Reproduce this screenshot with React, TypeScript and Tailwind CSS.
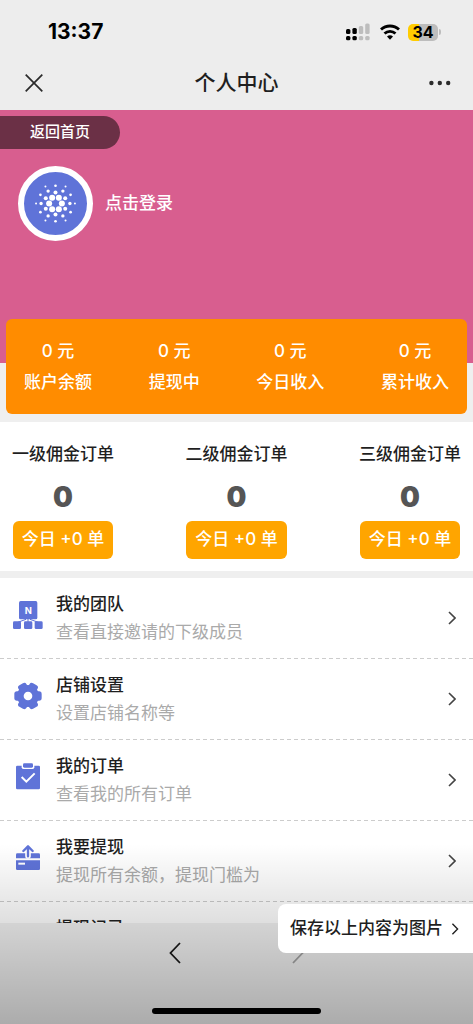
import type { ReactNode } from 'react';

const balances = [
  { label: '账户余额', value: 0 },
  { label: '提现中', value: 0 },
  { label: '今日收入', value: 0 },
  { label: '累计收入', value: 0 },
];

const orders = [
  { label: '一级佣金订单', total: 0, today: 0 },
  { label: '二级佣金订单', total: 0, today: 0 },
  { label: '三级佣金订单', total: 0, today: 0 },
];

const TeamIcon = () => (
  <svg viewBox="0 0 96 96" className="size-8 shrink-0 fill-[#5f73d8]" aria-hidden="true">
    <rect x="21" y="6" width="55" height="55" rx="5" />
    <path d="M48 60v10M17 70l25-9M79 70l-25-9" stroke="#5f73d8" strokeWidth="3" fill="none" />
    <rect x="3" y="67" width="24" height="23" rx="4" />
    <rect x="36" y="67" width="25" height="23" rx="4" />
    <rect x="68" y="67" width="24" height="23" rx="4" />
    <text x="49" y="44" textAnchor="middle" className="fill-white font-['Inter',sans-serif] text-[28px] font-bold">
      N
    </text>
  </svg>
);

const GearIcon = () => (
  <svg viewBox="-48 -48 96 96" className="size-8 shrink-0" aria-hidden="true">
    <g fill="#5f73d8">
      <circle r="33" />
      <rect x="-41" y="-14" width="82" height="28" rx="8" />
      <rect x="-41" y="-14" width="82" height="28" rx="8" transform="rotate(60)" />
      <rect x="-41" y="-14" width="82" height="28" rx="8" transform="rotate(120)" />
    </g>
    <circle r="13" fill="#fff" />
  </svg>
);

const OrderIcon = () => (
  <svg viewBox="0 0 96 96" className="size-8 shrink-0" aria-hidden="true">
    <rect x="12" y="14" width="72" height="71" rx="4" fill="#5f73d8" />
    <rect x="29" y="4" width="38" height="20" rx="5" fill="#fff" />
    <rect x="33" y="7" width="30" height="13" rx="4" fill="#5f73d8" />
    <path d="M29 48l14 14 25-25" stroke="#fff" strokeWidth="6" fill="none" />
  </svg>
);

const WithdrawIcon = () => (
  <svg viewBox="0 0 96 96" className="size-8 shrink-0" aria-hidden="true">
    <path d="M16 34h64q4 0 4 4v11H12V38q0-4 4-4z" fill="#5f73d8" />
    <path d="M12 55h72v25q0 4-4 4H16q-4 0-4-4z" fill="#5f73d8" />
    <path d="M48 42V14" stroke="#fff" strokeWidth="17" strokeLinecap="round" />
    <path d="M48 43V14M34 27l14-14 14 14" stroke="#5f73d8" strokeWidth="7" strokeLinecap="round" strokeLinejoin="round" fill="none" />
    <rect x="19" y="62" width="20" height="6" fill="#fff" />
  </svg>
);

const menu: { title: string; desc?: string; icon: ReactNode }[] = [
  { title: '我的团队', desc: '查看直接邀请的下级成员', icon: <TeamIcon /> },
  { title: '店铺设置', desc: '设置店铺名称等', icon: <GearIcon /> },
  { title: '我的订单', desc: '查看我的所有订单', icon: <OrderIcon /> },
  { title: '我要提现', desc: '提现所有余额，提现门槛为', icon: <WithdrawIcon /> },
  { title: '提现记录', icon: <OrderIcon /> },
];

// [x, y, radius] of every dot in the avatar
const dots = [
  [-19, 0, 9], [19, 0, 9], [-10, -17, 9], [10, -17, 9], [-10, 17, 9], [10, 17, 9],
  [0, -33, 6], [0, 33, 6], [-29, -16, 6], [29, -16, 6], [-29, 16, 6], [29, 16, 6],
  [-43, 0, 5], [43, 0, 5], [-22, -37, 5], [22, -37, 5], [-22, 37, 5], [22, 37, 5],
  [0, -53, 4], [0, 53, 4], [-45, -26, 4], [45, -26, 4], [-45, 26, 4], [45, 26, 4],
  [-58, 0, 3], [58, 0, 3], [-30, -51, 3], [30, -51, 3], [-30, 51, 3], [30, 51, 3],
];

const Chevron = ({ className }: { className: string }) => (
  <svg viewBox="0 0 8 14" className={className} fill="none" aria-hidden="true">
    <path d="M1 1l6 6-6 6" stroke="currentColor" strokeWidth="1.6" />
  </svg>
);

const StatusBar = () => (
  <div className="flex h-14 items-center justify-between pt-2 pr-8 pl-12">
    <span className="text-[21px] font-bold text-black">13:37</span>
    <div className="flex items-center gap-2">
      <svg viewBox="0 0 26 18" className="h-[18px] w-[26px]" aria-hidden="true">
        <g fill="#000">
          <rect x="0" y="6" width="4.4" height="5" rx="1.5" />
          <rect x="6.4" y="5" width="4.4" height="6" rx="1.5" />
          <rect x="0" y="13" width="4.4" height="4.2" rx="1.5" />
          <rect x="6.4" y="13" width="4.4" height="4.2" rx="1.5" />
        </g>
        <g fill="#bdbdbd">
          <rect x="12.8" y="3" width="4.4" height="8" rx="1.5" />
          <rect x="19.2" y="0.6" width="4.4" height="10.4" rx="1.5" />
          <rect x="12.8" y="13" width="4.4" height="4.2" rx="1.5" />
          <rect x="19.2" y="13" width="4.4" height="4.2" rx="1.5" />
        </g>
      </svg>
      <svg viewBox="0 0 20 16" className="h-4 w-5" fill="none" stroke="#000" strokeWidth="2.8" aria-hidden="true">
        <path d="M1 5.6a13 13 0 0 1 18 0" />
        <path d="M4.5 9.6a8 8 0 0 1 11 0" />
        <path d="M7 12.6a4.4 4.4 0 0 1 6 0L10 15.8z" fill="#000" stroke="none" />
      </svg>
      <div className="flex items-center gap-px">
        <span className="flex h-[17px] w-[30px] items-center justify-center rounded-[5px] bg-[linear-gradient(90deg,#ffcc00_37%,#bdbdbd_37%)] text-base leading-none font-bold text-black">
          34
        </span>
        <span className="h-[6px] w-[2px] rounded-r-full bg-[#bdbdbd]" />
      </div>
    </div>
  </div>
);

const App = () => {
  return (
    <div className="relative flex h-screen flex-col overflow-hidden bg-[#efefef] font-['Inter','Noto_Sans_CJK_SC',sans-serif] text-[17px] text-[#1f1f1f]">
      {/* Header */}
      <header className="shrink-0 bg-[#ededed]">
        <StatusBar />
        <div className="grid h-[54px] grid-cols-[1fr_auto_1fr] items-center px-[22px]">
          <button type="button" aria-label="关闭" className="justify-self-start p-[3px]">
            <svg viewBox="0 0 18 18" className="size-[18px]" stroke="#2b2b2b" strokeWidth="1.7" aria-hidden="true">
              <path d="M0.7 0.7l16.6 16.6M17.3 0.7L0.7 17.3" />
            </svg>
          </button>
          <h1 className="text-[21px] leading-7 font-medium">个人中心</h1>
          <button type="button" aria-label="更多" className="justify-self-end">
            <svg viewBox="0 0 22 6" className="h-[6px] w-[22px]" fill="#2b2b2b" aria-hidden="true">
              <circle cx="2.4" cy="3" r="2.2" />
              <circle cx="10.8" cy="3" r="2.2" />
              <circle cx="19.2" cy="3" r="2.2" />
            </svg>
          </button>
        </div>
      </header>

      <main className="min-h-0 flex-1 overflow-hidden">
        {/* Profile */}
        <section className="h-[253px] bg-[#d85e8f] pt-[6px] text-white">
          <a href="#home" className="flex h-[33px] w-fit items-center rounded-r-full bg-[#6b3046] px-[30px] text-[15px] font-medium">
            返回首页
          </a>
          <a href="#login" className="mt-[17px] ml-[18px] flex w-fit items-center gap-3 font-medium">
            <svg viewBox="-94 -94 188 188" className="size-[75px] rounded-full border-[6px] border-white bg-[#5f73d8] fill-white" aria-hidden="true">
              {dots.map(([x, y, r]) => (
                <circle key={`${x},${y}`} cx={x} cy={y} r={r} />
              ))}
            </svg>
            点击登录
          </a>
        </section>

        {/* Balances */}
        <section className="relative mx-[6px] -mt-11 mb-2 flex justify-between rounded-md bg-[#ff8c00] px-[18px] py-4 leading-8 font-medium text-white">
          {balances.map((item) => (
            <div key={item.label} className="text-center">
              <p>{item.value} 元</p>
              <p className="leading-[31px]">{item.label}</p>
            </div>
          ))}
        </section>

        {/* Commission orders */}
        <section className="mb-[7px] flex justify-between bg-white px-3 pt-4 pb-3">
          {orders.map((item) => (
            <div key={item.label} className="flex flex-col items-center">
              <h2 className="leading-8 font-medium">{item.label}</h2>
              <p className="mt-2 mb-1 text-[28px] leading-[39px] font-black text-[#555]">{item.total}</p>
              <button type="button" className="h-[38px] rounded-md bg-[#ffa500] px-[9px] font-medium text-white">
                今日 +{item.today} 单
              </button>
            </div>
          ))}
        </section>

        {/* Menu */}
        <nav className="bg-white">
          {menu.map((item) => (
            <a key={item.title} href="#menu" className="block">
              <div className="flex gap-3 px-3 pt-3 pb-3">
                <span className="pt-[9px]">{item.icon}</span>
                <div className="flex-1 leading-7">
                  <h3 className="font-medium">{item.title}</h3>
                  {item.desc && <p className="text-[#aaa]">{item.desc}</p>}
                </div>
                <Chevron className="mr-[5px] h-[14px] w-2 self-center text-[#444]" />
              </div>
              <div className="h-px bg-[repeating-linear-gradient(90deg,#ccc_0_4px,transparent_4px_7px)]" />
            </a>
          ))}
        </nav>
      </main>

      {/* Browser toolbar */}
      <footer className="shrink-0 bg-[#f2f2f2] pb-[10px]">
        <div className="flex h-[60px] items-center justify-center gap-[111px]">
          <button type="button" aria-label="后退">
            <svg viewBox="0 0 12 22" className="h-[22px] w-3" fill="none" stroke="#1a1a1a" strokeWidth="1.8" aria-hidden="true">
              <path d="M11 1L1.5 11l9.5 10" />
            </svg>
          </button>
          <button type="button" aria-label="前进" disabled>
            <svg viewBox="0 0 12 22" className="h-[22px] w-3" fill="none" stroke="#a3a3a3" strokeWidth="1.8" aria-hidden="true">
              <path d="M1 1l9.5 10L1 21" />
            </svg>
          </button>
        </div>
        <div className="mx-auto mt-[25px] h-[6px] w-[169px] rounded-full bg-black" />
      </footer>

      {/* Bottom shade */}
      <div className="pointer-events-none absolute inset-x-0 bottom-0 h-[180px] bg-[linear-gradient(to_top,rgba(0,0,0,0.29),rgba(0,0,0,0))]" />

      <button type="button" className="absolute right-0 bottom-[71px] flex h-[49px] items-center gap-2 rounded-l-lg bg-white pr-[14px] pl-3 font-medium">
        保存以上内容为图片
        <Chevron className="h-3 w-2" />
      </button>
    </div>
  );
};

export default App;
